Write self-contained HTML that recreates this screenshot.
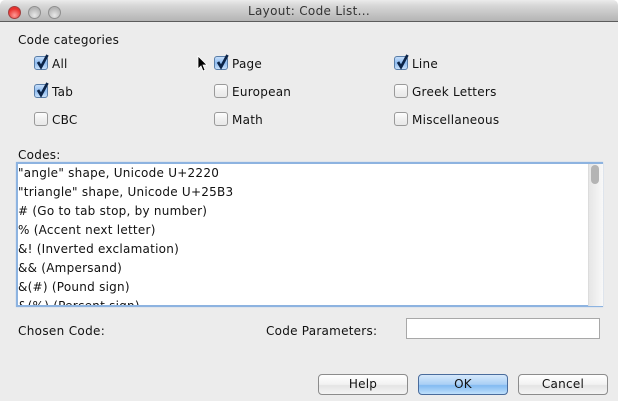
<!DOCTYPE html>
<html><head><meta charset="utf-8"><style>
html,body{margin:0;padding:0;background:#fff}
#w{position:relative;width:618px;height:401px;overflow:hidden;background:#ececec;font-family:"DejaVu Sans","Liberation Sans",sans-serif;font-size:12px;letter-spacing:.25px;color:#111;border-radius:5px 5px 0 0}
#w div,#w span.t{position:absolute;white-space:nowrap}
.t{line-height:16px}
#tb{left:0;top:0;width:618px;height:21px;background:linear-gradient(#ececec,#d8d8d8 25%,#b4b4b4);border-bottom:1px solid #5c5c5c;border-radius:5px 5px 0 0}
.dot{width:11px;height:11px;top:6px;border-radius:50%;border:1px solid #8f8f8f;background:radial-gradient(circle at 50% 75%,#e8e8e8,#b5b5b5 70%)}
.cb{width:12px;height:12px;border:1px solid #9a9a9a;border-radius:3px;background:linear-gradient(#fdfdfd,#f0f0f0 50%,#e8e8e8)}
.on{border-color:#5a7ea8;background:linear-gradient(#c6defa,#8fbcf0 50%,#c8e0fa)}
.cb svg{position:absolute;left:0;top:-3px}
.btn{top:374px;width:88px;height:19px;border:1px solid #8c8c8c;border-radius:4px;background:linear-gradient(#fff,#f2f2f2 50%,#e4e4e4 55%,#f4f4f4);text-align:center;line-height:19px;color:#111}
</style></head><body><div id="w">
<div id="tb"></div>
<div class="dot" style="left:8px;background:radial-gradient(circle at 50% 75%,#ff9a96,#e8322e 65%);border-color:#a04040"></div>
<div class="dot" style="left:28px"></div>
<div class="dot" style="left:48px"></div>
<div class="t" style="left:248px;top:3px;color:#333;letter-spacing:.32px">Layout: Code List...</div>

<div class="t" style="left:18px;top:32px">Code categories</div>

<div class="cb on" style="left:34px;top:56px"><svg width="16" height="16" viewBox="0 0 16 16"><path d="M3 8l3 5L12.5 1" fill="none" stroke="#0b2448" stroke-width="2.7"/></svg></div>
<div class="t" style="left:52px;top:56px">All</div>
<div class="cb on" style="left:214px;top:56px"><svg width="16" height="16" viewBox="0 0 16 16"><path d="M3 8l3 5L12.5 1" fill="none" stroke="#0b2448" stroke-width="2.7"/></svg></div>
<div class="t" style="left:232px;top:56px">Page</div>
<div class="cb on" style="left:394px;top:56px"><svg width="16" height="16" viewBox="0 0 16 16"><path d="M3 8l3 5L12.5 1" fill="none" stroke="#0b2448" stroke-width="2.7"/></svg></div>
<div class="t" style="left:412px;top:56px">Line</div>

<div class="cb on" style="left:34px;top:84px"><svg width="16" height="16" viewBox="0 0 16 16"><path d="M3 8l3 5L12.5 1" fill="none" stroke="#0b2448" stroke-width="2.7"/></svg></div>
<div class="t" style="left:52px;top:84px">Tab</div>
<div class="cb" style="left:214px;top:84px"></div>
<div class="t" style="left:232px;top:84px">European</div>
<div class="cb" style="left:394px;top:84px"></div>
<div class="t" style="left:412px;top:84px">Greek Letters</div>

<div class="cb" style="left:34px;top:112px"></div>
<div class="t" style="left:52px;top:112px">CBC</div>
<div class="cb" style="left:214px;top:112px"></div>
<div class="t" style="left:232px;top:112px">Math</div>
<div class="cb" style="left:394px;top:112px"></div>
<div class="t" style="left:412px;top:112px">Miscellaneous</div>

<svg style="position:absolute;left:196px;top:55px" width="14" height="19" viewBox="0 0 14 19"><path d="M2 1v13l3-3 2 5 2-1-2-5h4z" fill="#000" stroke="#fff" stroke-width=".8"/></svg>

<div class="t" style="left:18px;top:147px">Codes:</div>
<div style="left:16px;top:162px;width:583px;height:141px;background:#fff;border:2px solid #8db3e0;box-shadow:0 0 1px #a8c6ea"></div>
<div style="left:588px;top:164px;width:14px;height:142px;background:linear-gradient(90deg,#e6e6e6,#f8f8f8);border-left:1px solid #dcdcdc"></div>
<div style="left:591px;top:165px;width:8px;height:19px;border-radius:4px;background:#b4b4b4"></div>
<div style="left:18px;top:164px;width:569px;height:141px;overflow:hidden">
<div class="t" style="left:0;top:1px">"angle" shape, Unicode U+2220</div>
<div class="t" style="left:0;top:20px">"triangle" shape, Unicode U+25B3</div>
<div class="t" style="left:0;top:39px"># (Go to tab stop, by number)</div>
<div class="t" style="left:0;top:58px">% (Accent next letter)</div>
<div class="t" style="left:0;top:77px">&amp;! (Inverted exclamation)</div>
<div class="t" style="left:0;top:96px">&amp;&amp; (Ampersand)</div>
<div class="t" style="left:0;top:115px">&amp;(#) (Pound sign)</div>
<div class="t" style="left:0;top:134px">&amp;(%) (Percent sign)</div>
</div>

<div class="t" style="left:18px;top:323px;letter-spacing:.33px">Chosen Code:</div>
<div class="t" style="left:266px;top:323px">Code Parameters:</div>
<div style="left:406px;top:318px;width:192px;height:19px;background:#fff;border:1px solid #a8a8a8"></div>

<div class="btn" style="left:318px">Help</div>
<div class="btn" style="left:418px;border-color:#4a6c9c;background:linear-gradient(#d6e8fb,#a9cff5 50%,#82baf2 55%,#c0e0fb)">OK</div>
<div class="btn" style="left:518px">Cancel</div>
</div></body></html>
